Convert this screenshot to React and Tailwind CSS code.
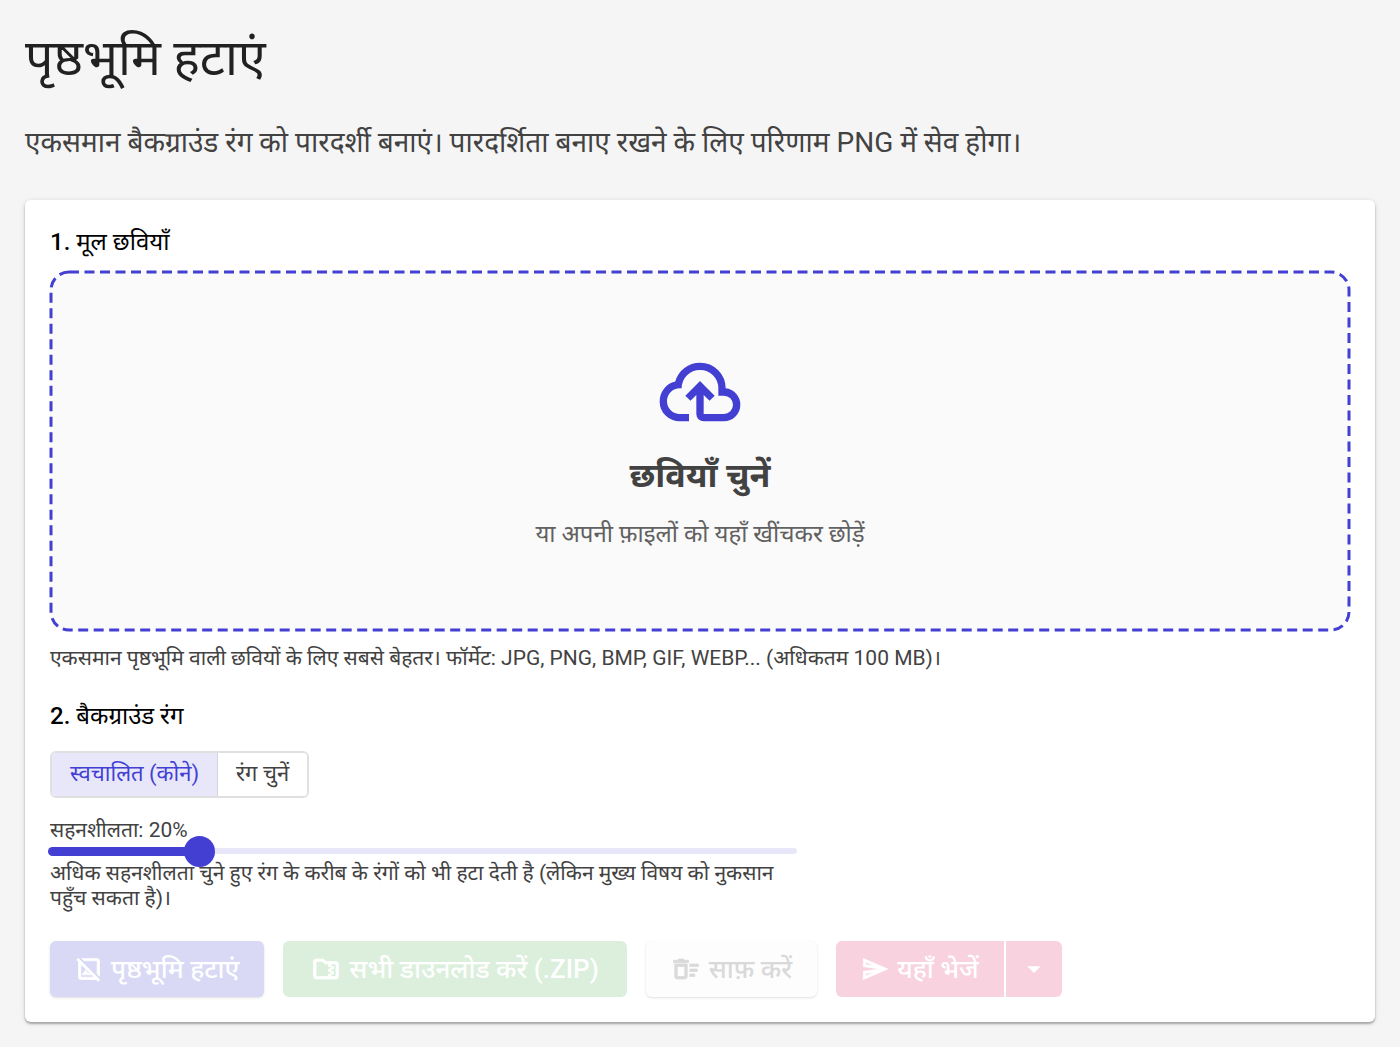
import { useState } from 'react'
import {
  MdOutlineHideImage,
  MdOutlineFolderZip,
  MdOutlineDeleteSweep,
  MdOutlineSend,
  MdArrowDropDown,
} from 'react-icons/md'

function CloudUploadIcon() {
  return (
    <svg viewBox="0 -960 960 960" className="size-22 fill-[#433fd3]" aria-hidden="true">
      <path d="M260-160q-91 0-155.5-63T40-377q0-78 47-139t123-78q25-92 100-149t170-57q117 0 198.5 81.5T760-520q69 8 114.5 59.5T920-340q0 75-52.5 127.5T740-160H520q-33 0-56.5-23.5T440-240v-206l-64 62-56-56 160-160 160 160-56 56-64-62v206h220q42 0 71-29t29-71q0-42-29-71t-71-29h-60v-80q0-83-58.5-141.5T480-720q-83 0-141.5 58.5T280-520h-20q-58 0-99 41t-41 99q0 58 41 99t99 41h100v80H260Z" />
    </svg>
  )
}

function SectionTitle({ number, children }) {
  return (
    <h2 className="text-2xl leading-[34px] text-black">
      <span className="font-medium">{number}.</span> {children}
    </h2>
  )
}

function DropZone() {
  return (
    <button
      type="button"
      className="relative mt-3 flex h-[360px] w-full flex-col items-center rounded-[20px] bg-[#fafafa] pt-[77px]"
    >
      {/* Dashed outline */}
      <svg className="absolute inset-px h-[calc(100%-2px)] w-[calc(100%-2px)] overflow-visible" aria-hidden="true">
        <rect width="100%" height="100%" rx="18" fill="none" stroke="#433fd3" strokeWidth="3" strokeDasharray="10 5.5" />
      </svg>
      <CloudUploadIcon />
      <span className="mt-3 text-[34px] leading-[54px] font-bold text-[#424242]">छवियाँ चुनें</span>
      <span className="mt-3.5 text-2xl leading-9 text-[#616161]">या अपनी फ़ाइलों को यहाँ खींचकर छोड़ें</span>
    </button>
  )
}

function ColorModeToggle() {
  const [mode, setMode] = useState('auto')
  const active = 'bg-[#e8e7fa] text-[#433fd3]'
  const idle = 'bg-white text-[#424242]'

  return (
    <div className="mt-[18px] flex h-[47px] w-fit overflow-hidden rounded-md border-2 border-[#e0e0e0] text-[22px]">
      <button
        type="button"
        aria-pressed={mode === 'auto'}
        onClick={() => setMode('auto')}
        className={`border-r border-[#d6d6e0] px-[18px] pb-0.5 ${mode === 'auto' ? active : idle}`}
      >
        स्वचालित (कोने)
      </button>
      <button
        type="button"
        aria-pressed={mode === 'pick'}
        onClick={() => setMode('pick')}
        className={`px-[18px] pb-0.5 ${mode === 'pick' ? active : idle}`}
      >
        रंग चुनें
      </button>
    </div>
  )
}

function ToleranceSlider() {
  const [tolerance, setTolerance] = useState(20)

  return (
    <div className="mt-5 max-w-[747px] text-[21px] leading-[25px] text-[#424242]">
      <label htmlFor="tolerance" className="block">सहनशीलता: {tolerance}%</label>
      <div className="-mt-2 -mb-[5px] grid h-[31px] items-center">
        <div className="col-start-1 row-start-1 h-1.5 rounded-full bg-[#e8e7fa]"></div>
        <div
          className="col-start-1 row-start-1 -ml-0.5 h-[9px] rounded-full bg-[#433fd3]"
          style={{ width: `${tolerance}%` }}
        ></div>
        <input
          id="tolerance"
          type="range"
          min="0"
          max="100"
          value={tolerance}
          onChange={(e) => setTolerance(Number(e.target.value))}
          className="z-10 col-start-1 row-start-1 -mx-4 h-8 appearance-none bg-transparent [&::-webkit-slider-thumb]:size-[31px] [&::-webkit-slider-thumb]:appearance-none [&::-webkit-slider-thumb]:rounded-full [&::-webkit-slider-thumb]:bg-[#433fd3]"
        />
      </div>
      <p>अधिक सहनशीलता चुने हुए रंग के करीब के रंगों को भी हटा देती है (लेकिन मुख्य विषय को नुकसान पहुँच सकता है)।</p>
    </div>
  )
}

function Actions() {
  const base = 'flex h-14 items-center gap-2 text-[26px] font-medium'
  // the icons carry an empty 24x24 frame path that must stay unstroked
  const icon = 'stroke-current stroke-[0.6] [&_path[fill=none]]:stroke-none'

  return (
    <div className="mt-[30px] flex flex-wrap gap-[19px]">
      <button type="button" disabled className={`${base} rounded-md bg-[#d9d9f5] px-[25px] text-white shadow-sm`}>
        <MdOutlineHideImage className={`size-7 ${icon}`} />
        पृष्ठभूमि हटाएं
      </button>
      <button type="button" disabled className={`${base} rounded-md bg-[#dbefdc] px-7 text-white`}>
        <MdOutlineFolderZip className={`size-[30px] ${icon}`} />
        सभी डाउनलोड करें (.ZIP)
      </button>
      <button type="button" disabled className={`${base} rounded-md bg-[#fdfdfd] px-[25px] text-[#d9d9d9] shadow-sm`}>
        <MdOutlineDeleteSweep className={`size-[30px] ${icon}`} />
        साफ़ करें
      </button>
      <div className="flex gap-0.5">
        <button type="button" disabled className={`${base} rounded-l-md bg-[#f8d2df] px-[25px] text-white`}>
          <MdOutlineSend className={`size-7 ${icon}`} />
          यहाँ भेजें
        </button>
        <button
          type="button"
          disabled
          aria-label="और विकल्प"
          className="flex h-14 w-14 items-center justify-center rounded-r-md bg-[#f8d2df] text-white"
        >
          <MdArrowDropDown className="size-8" />
        </button>
      </div>
    </div>
  )
}

export default function App() {
  return (
    <div className="min-h-screen bg-[#f5f5f5] p-[25px] font-['Roboto','Noto_Sans_Devanagari','Noto_Sans',sans-serif] text-[#212121]">
      <h1 className="text-[50px] leading-[66px]">पृष्ठभूमि हटाएं</h1>
      <p className="mt-8 text-[28px] leading-10 text-[#424242]">
        एकसमान बैकग्राउंड रंग को पारदर्शी बनाएं। पारदर्शिता बनाए रखने के लिए परिणाम PNG में सेव होगा।
      </p>

      <main className="mt-[37px] rounded-md bg-white p-[25px] shadow-[0_2px_2px_rgba(0,0,0,0.25),0_1px_5px_rgba(0,0,0,0.15)]">
        <SectionTitle number="1">मूल छवियाँ</SectionTitle>
        <DropZone />
        <p className="mt-3 mb-[26px] text-[21px] leading-[30px] text-[#424242]">
          एकसमान पृष्ठभूमि वाली छवियों के लिए सबसे बेहतर। फॉर्मेट: JPG, PNG, BMP, GIF, WEBP... (अधिकतम 100 MB)।
        </p>

        <SectionTitle number="2">बैकग्राउंड रंग</SectionTitle>
        <ColorModeToggle />
        <ToleranceSlider />
        <Actions />
      </main>
    </div>
  )
}
